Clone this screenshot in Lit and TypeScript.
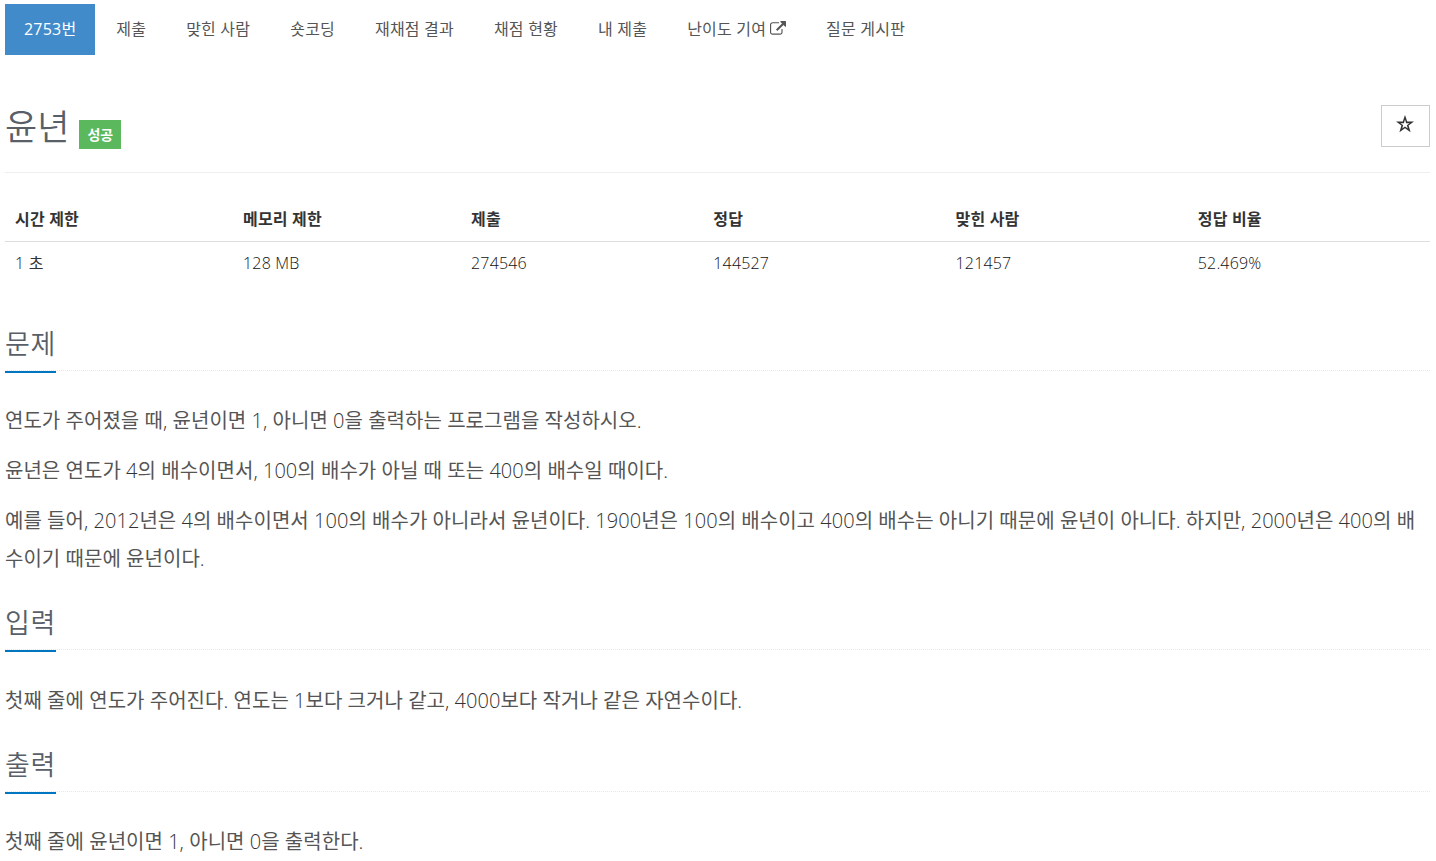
import { css, html, LitElement } from "lit";
import { customElement, state } from "lit/decorators.js";
import { map } from "lit/directives/map.js";

const externalIcon = html`
  <svg class="external" viewBox="0 0 1792 1792" aria-hidden="true">
    <path
      fill="currentColor"
      d="M1408 928v320q0 119-84.500 203.500T1120 1536H288q-119 0-203.500-84.500T0 1248V416q0-119 84.500-203.500T288 128h704q14 0 23 9t9 23v64q0 14-9 23t-23 9H288q-66 0-113 47t-47 113v832q0 66 47 113t113 47h832q66 0 113-47t47-113V928q0-14 9-23t23-9h64q14 0 23 9t9 23zm384-864v512q0 26-19 45t-45 19-45-19l-176-176-652 652q-10 10-23 10t-23-10L695 983q-10-10-10-23t10-23l652-652-176-176q-19-19-19-45t19-45 45-19h512q26 0 45 19t19 45z"
    />
  </svg>
`;

// Numbers and latin letters are set lighter than the Korean text around them
const mixed = (text: string) =>
  map(text.split(/([0-9A-Za-z.,%]+)/).filter(Boolean), (part) =>
    /^[0-9A-Za-z.,%]/.test(part) ? html`<span class="light">${part}</span>` : part
  );

@customElement("app-root")
export class ProblemPage extends LitElement {
  static styles = css`
    :host {
      display: block;
      box-sizing: border-box;
      height: 861px;
      overflow: hidden;
      padding: 4px 6px 0 5px;
      background-color: #fff;
      color: #333;
      font-family: "Open Sans", "Noto Sans CJK KR", sans-serif;
      font-size: 16px;
      line-height: 24px;
    }

    .light {
      color: #333;
      font-weight: 300;
    }

    .info .light {
      color: #111;
    }

    .menu {
      display: flex;
      gap: 2px;
      margin: 0;
      padding: 0;
      list-style: none;
    }

    .menu a {
      display: flex;
      align-items: center;
      box-sizing: border-box;
      height: 51px;
      padding: 0 19px 2px;
      color: #555;
      letter-spacing: 0.2px;
      white-space: nowrap;
    }

    .menu .active {
      background-color: #428bca;
      color: #fff;
    }

    .external {
      width: 16px;
      height: 16px;
      margin-left: 4px;
    }

    .header {
      display: flex;
      align-items: flex-start;
      height: 67px;
      margin-top: 50px;
      border-bottom: 1px solid #eee;
    }

    .title {
      margin: 0;
      color: #585f69;
      font-size: 35px;
      font-weight: 350;
      line-height: 44px;
    }

    .label {
      margin: 15px 0 0 10px;
      padding: 0 8px;
      background-color: #5cb85c;
      color: #fff;
      font-size: 14px;
      font-weight: 700;
      line-height: 29px;
    }

    .star {
      display: flex;
      align-items: center;
      justify-content: center;
      box-sizing: border-box;
      width: 49px;
      height: 42px;
      margin-left: auto;
      padding: 0 1px 4px 0;
      border: 1px solid #ccc;
      border-radius: 0;
      background-color: #fff;
      color: #333;
    }

    .star svg {
      width: 18px;
      height: 18px;
    }

    .info {
      width: 100%;
      margin-top: 24px;
      border-collapse: separate;
      border-spacing: 0;
      table-layout: fixed;
      text-align: left;
      letter-spacing: 0.18px;
    }

    .info th {
      box-sizing: border-box;
      height: 45px;
      padding: 0 10px;
      border-bottom: 1px solid #ddd;
      font-weight: 700;
    }

    .info td {
      height: 42px;
      padding: 0 10px;
    }

    .narrow {
      width: 16%;
    }

    .wide {
      width: 17%;
    }

    .headline {
      display: flex;
      height: 48px;
      border-bottom: 1px dotted #e4e9f0;
    }

    .headline h2 {
      height: 49px;
      margin: 0;
      border-bottom: 2px solid #0076c0;
      color: #585f69;
      font-size: 27px;
      font-weight: 350;
      letter-spacing: 0.6px;
      line-height: 44px;
    }

    .section {
      margin-top: 23px;
    }

    .info + .section {
      margin-top: 38px;
    }

    .text {
      margin-top: 31px;
      color: #555;
      font-size: 20px;
      letter-spacing: 0.035px;
      line-height: 38px;
    }

    .section:nth-of-type(2) .text {
      margin-top: 32px;
    }

    .text p {
      margin: 0 0 12px;
      word-break: break-all;
    }
  `;

  @state()
  private _menu = [
    "2753번",
    "제출",
    "맞힌 사람",
    "숏코딩",
    "재채점 결과",
    "채점 현황",
    "내 제출",
    "난이도 기여",
    "질문 게시판",
  ];

  @state()
  private _info = [
    { name: "시간 제한", value: "1 초", size: "narrow" },
    { name: "메모리 제한", value: "128 MB", size: "narrow" },
    { name: "제출", value: "274546", size: "wide" },
    { name: "정답", value: "144527", size: "wide" },
    { name: "맞힌 사람", value: "121457", size: "wide" },
    { name: "정답 비율", value: "52.469%", size: "wide" },
  ];

  @state()
  private _sections = [
    {
      title: "문제",
      text: [
        "연도가 주어졌을 때, 윤년이면 1, 아니면 0을 출력하는 프로그램을 작성하시오.",
        "윤년은 연도가 4의 배수이면서, 100의 배수가 아닐 때 또는 400의 배수일 때이다.",
        "예를 들어, 2012년은 4의 배수이면서 100의 배수가 아니라서 윤년이다. 1900년은 100의 배수이고 400의 배수는 아니기 때문에 윤년이 아니다. 하지만, 2000년은 400의 배수이기 때문에 윤년이다.",
      ],
    },
    {
      title: "입력",
      text: ["첫째 줄에 연도가 주어진다. 연도는 1보다 크거나 같고, 4000보다 작거나 같은 자연수이다."],
    },
    {
      title: "출력",
      text: ["첫째 줄에 윤년이면 1, 아니면 0을 출력한다."],
    },
  ];

  render() {
    return html`
      <ul class="menu">
        ${map(
          this._menu,
          (item, i) => html`
            <li>
              <a class=${i === 0 ? "active" : ""}>${item}${item === "난이도 기여" ? externalIcon : ""}</a>
            </li>
          `
        )}
      </ul>

      <div class="header">
        <h1 class="title">윤년</h1>
        <span class="label">성공</span>
        <button class="star" aria-label="즐겨찾기">
          <svg viewBox="0 0 18 18">
            <path
              fill="currentColor"
              fill-rule="evenodd"
              d="M9 0 11.200 6.400H18L12.600 10.600 14.600 17.200 9 13.200 3.400 17.200 5.400 10.600 0 6.400H6.800ZM9 4.600 7.900 8.200H4.500L7.200 10.300 6.200 13.500 9 11.600 11.800 13.500 10.800 10.300 13.500 8.200H10.100Z"
            />
          </svg>
        </button>
      </div>

      <table class="info">
        <thead>
          <tr>
            ${map(this._info, (col) => html`<th class=${col.size}>${col.name}</th>`)}
          </tr>
        </thead>
        <tbody>
          <tr>
            ${map(this._info, (col) => html`<td>${mixed(col.value)}</td>`)}
          </tr>
        </tbody>
      </table>

      ${map(
        this._sections,
        (section) => html`
          <section class="section">
            <div class="headline"><h2>${section.title}</h2></div>
            <div class="text">${map(section.text, (line) => html`<p>${mixed(line)}</p>`)}</div>
          </section>
        `
      )}
    `;
  }
}
